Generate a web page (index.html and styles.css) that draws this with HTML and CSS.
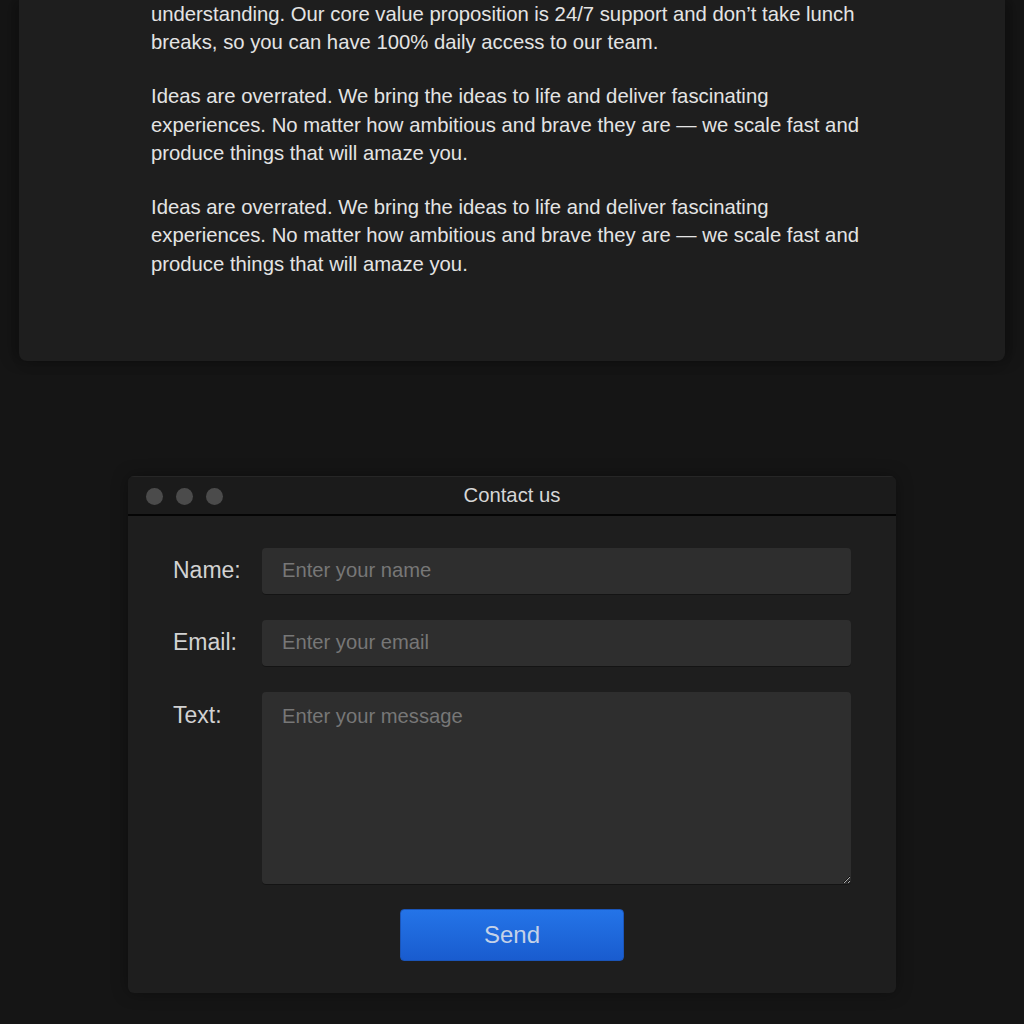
FILE: index.html
```html
<!DOCTYPE html>
<html lang="en">
<head>
<meta charset="utf-8">
<title>Contact</title>
<link rel="stylesheet" href="styles.css">
</head>
<body>
<main class="page">
  <section class="card">
    <div class="card-content">
      <p>understanding. Our core value proposition is 24/7 support and don’t take lunch breaks, so you can have 100% daily access to our team.</p>
      <p>Ideas are overrated. We bring the ideas to life and deliver fascinating experiences. No matter how ambitious and brave they are — we scale fast and produce things that will amaze you.</p>
      <p>Ideas are overrated. We bring the ideas to life and deliver fascinating experiences. No matter how ambitious and brave they are — we scale fast and produce things that will amaze you.</p>
    </div>
  </section>

  <section class="window">
    <header class="titlebar">
      <div class="dots"><span class="dot"></span><span class="dot"></span><span class="dot"></span></div>
      <h2 class="title">Contact us</h2>
    </header>
    <form class="form">
      <div class="row">
        <label class="label" for="name">Name:</label>
        <input class="field" id="name" type="text" placeholder="Enter your name">
      </div>
      <div class="row">
        <label class="label" for="email">Email:</label>
        <input class="field" id="email" type="email" placeholder="Enter your email">
      </div>
      <div class="row row-top">
        <label class="label label-top" for="text">Text:</label>
        <textarea class="field area" id="text" placeholder="Enter your message"></textarea>
      </div>
      <div class="actions">
        <button class="send" type="button">Send</button>
      </div>
    </form>
  </section>
</main>
</body>
</html>
```
FILE: styles.css
```css
* { box-sizing: border-box; }
html, body {
  margin: 0;
  padding: 0;
  background: #151515;
}
body {
  font-family: "Liberation Sans", Arial, sans-serif;
  color: #e4e4e4;
}
.page {
  display: flex;
  flex-direction: column;
  align-items: center;
  padding: 0 19px 32px;
}
.card {
  width: 100%;
  background: #1e1e1e;
  border-radius: 0 0 8px 8px;
  box-shadow: -6px 0 14px rgba(0,0,0,0.25), 6px 0 14px rgba(0,0,0,0.25);
  padding: 0 0 57px;
}
.card-content {
  width: 722px;
  margin: 0 auto;
}
.card-content p {
  margin: 0 0 25.5px;
  font-size: 20.3px;
  line-height: 28.4px;
}
.window {
  margin-top: 115px;
  width: 768px;
  background: #1e1e1e;
  border-radius: 6px;
  box-shadow: 0 0 16px rgba(0,0,0,0.35);
  overflow: hidden;
}
.titlebar {
  position: relative;
  height: 40px;
  background: #1b1b1b;
  border-top: 1px solid #262626;
  border-bottom: 2px solid #050505;
  display: flex;
  align-items: center;
  justify-content: center;
}
.dots {
  position: absolute;
  left: 18px;
  top: 11px;
  display: flex;
  gap: 13px;
}
.dot {
  width: 17px;
  height: 17px;
  border-radius: 50%;
  background: #4b4b4b;
}
.title {
  margin: 0;
  font-size: 20.3px;
  font-weight: normal;
  color: #d6d6d6;
}
.form {
  padding: 32px 45px 32px;
  display: flex;
  flex-direction: column;
  gap: 26px;
}
.row {
  display: flex;
  align-items: center;
}
.row-top { align-items: flex-start; }
.label {
  width: 89px;
  flex: none;
  font-size: 23px;
  color: #d2d2d2;
}
.label-top { padding-top: 10px; }
.field {
  flex: 1;
  height: 46px;
  background: #2e2e2e;
  border: none;
  border-radius: 4px;
  padding: 0 20px;
  font-family: "Liberation Sans", Arial, sans-serif;
  font-size: 20.2px;
  color: #e0e0e0;
  outline: none;
  box-shadow: 0 1px 0 rgba(0,0,0,0.3);
}
.field::placeholder { color: #777; }
.area {
  height: 192px;
  padding: 12px 20px;
  resize: vertical;
  line-height: 24px;
}
.actions {
  display: flex;
  justify-content: center;
  margin-top: -1px;
}
.send {
  width: 224px;
  height: 52px;
  border: 1px solid #1b55b8;
  border-radius: 4px;
  background: linear-gradient(#2474e8, #195ccf);
  color: #c4d2e8;
  font-family: "Liberation Sans", Arial, sans-serif;
  font-size: 24px;
  cursor: pointer;
}
```
